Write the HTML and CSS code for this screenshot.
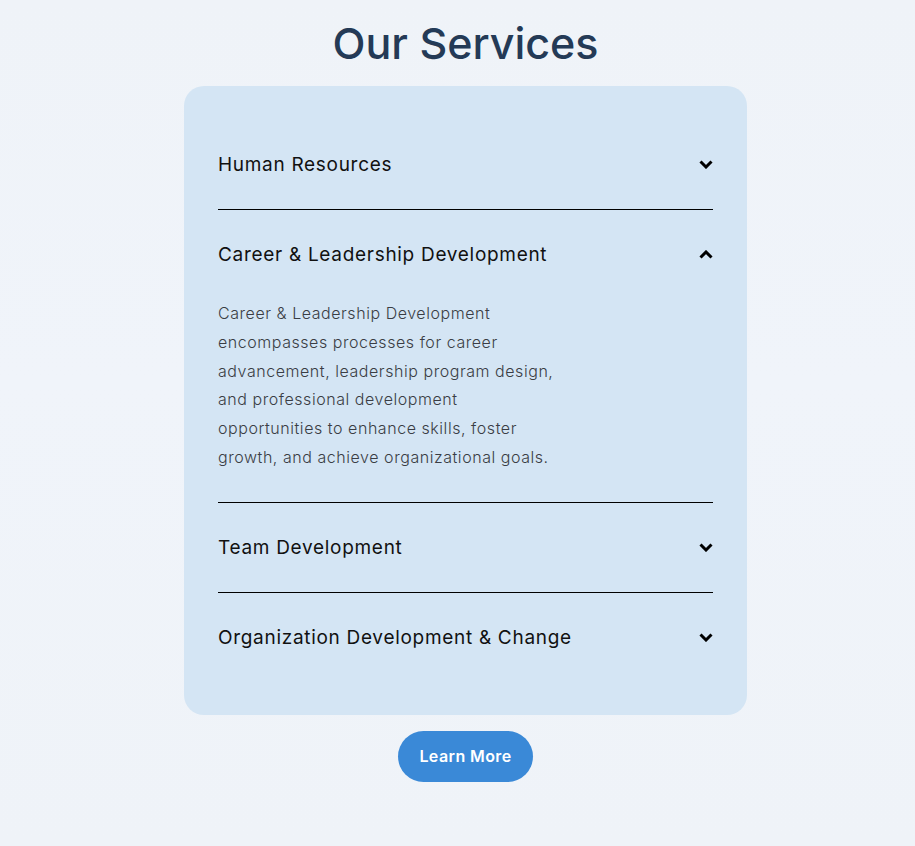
FILE: index.html
```html
<!DOCTYPE html>
<html lang="en">
<head>
    <meta charset="UTF-8">
    <meta name="viewport" content="width=device-width, initial-scale=1.0">
    <title>Our Services</title>
    <link rel="stylesheet" href="styles.css">
</head>
<body>
    <section class="services">
        <h1 class="services-title">Our Services</h1>
        <div class="accordion">
            <div class="acc-item">
                <div class="acc-head">
                    <span>Human Resources</span>
                    <svg class="chev" viewBox="0 0 14 9"><polyline points="1.5,1.5 7,7 12.5,1.5"/></svg>
                </div>
            </div>
            <div class="acc-item open">
                <div class="acc-head">
                    <span>Career &amp; Leadership Development</span>
                    <svg class="chev" viewBox="0 0 14 9"><polyline points="1.5,7.5 7,2 12.5,7.5"/></svg>
                </div>
                <p class="acc-body">Career &amp; Leadership Development encompasses processes for career advancement, leadership program design, and professional development opportunities to enhance skills, foster growth, and achieve organizational goals.</p>
            </div>
            <div class="acc-item">
                <div class="acc-head">
                    <span>Team Development</span>
                    <svg class="chev" viewBox="0 0 14 9"><polyline points="1.5,1.5 7,7 12.5,1.5"/></svg>
                </div>
            </div>
            <div class="acc-item last">
                <div class="acc-head">
                    <span>Organization Development &amp; Change</span>
                    <svg class="chev" viewBox="0 0 14 9"><polyline points="1.5,1.5 7,7 12.5,1.5"/></svg>
                </div>
            </div>
        </div>
        <a class="btn" href="#">Learn More</a>
    </section>
</body>
</html>
```

FILE: styles.css
```css
*{
    margin: 0px;
    padding: 0px;
    box-sizing: border-box;
}
body{
    height: 846px;
    background: linear-gradient(#eff3f8, #f0f4fa 45%, #eff3f8);
    font-family: Inter, "Noto Sans", sans-serif;
    color: #111;
}
.services{
    display: flex;
    flex-direction: column;
    align-items: center;
    padding-top: 17px;
    padding-left: 16px;
}
.services-title{
    font-size: 43px;
    font-weight: 500;
    line-height: 53px;
    color: #243a56;
    margin-bottom: 16px;
}
.accordion{
    width: 563px;
    background-color: #d4e5f4;
    border-radius: 20px;
    padding: 34px 34px 33px;
}
.acc-item{
    border-bottom: 1px solid #000;
}
.acc-item.last{
    border-bottom: none;
}
.acc-head{
    display: flex;
    justify-content: space-between;
    align-items: center;
    height: 89px;
    font-size: 19px;
    font-weight: 400;
    letter-spacing: 0.7px;
    color: #111;
}
.chev{
    width: 14px;
    height: 9px;
}
.chev polyline{
    fill: none;
    stroke: #000;
    stroke-width: 3;
}
.acc-body{
    max-width: 345px;
    font-size: 16px;
    font-weight: 300;
    letter-spacing: 0.55px;
    line-height: 28.8px;
    color: #3a3d44;
    padding-bottom: 30px;
}
.btn{
    margin-top: 16px;
    display: inline-block;
    width: 135px;
    height: 51px;
    line-height: 51px;
    text-align: center;
    border-radius: 26px;
    background-color: #3a89d7;
    color: #fff;
    font-size: 16px;
    font-weight: 600;
    letter-spacing: 0.4px;
    text-decoration: none;
}
```
